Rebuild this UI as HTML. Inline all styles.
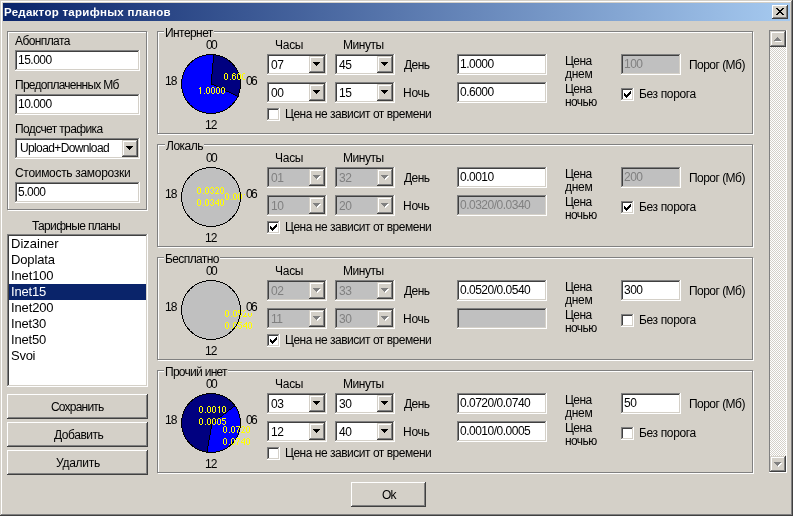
<!DOCTYPE html><html><head><meta charset="utf-8"><style>
html,body{margin:0;padding:0;background:#d4d0c8;}
#w{position:relative;width:793px;height:516px;overflow:hidden;}
#w div{position:absolute;box-sizing:border-box;}
.t,.L,.y,.T{font-family:"Liberation Sans",sans-serif;white-space:pre;color:#000;will-change:transform;}
.t{font-size:12px;line-height:13px;letter-spacing:-0.5px;}
.c{text-align:center;}
.gl{background:#d4d0c8;padding:0 1px;}
.L{font-size:13px;line-height:16px;letter-spacing:-0.1px;}
.y{font-size:10px;line-height:10px;letter-spacing:-0.5px;color:#ffff00;}
.T{font-size:11.5px;line-height:18px;font-weight:bold;letter-spacing:0.45px;color:#fff;}
</style></head><body><div id="w"><div style="left:0px;top:0px;width:793px;height:516px;background:#d4d0c8;box-shadow:inset -1px -1px #404040,inset 1px 1px #d4d0c8,inset -2px -2px #808080,inset 2px 2px #fff"></div><div style="left:3px;top:3px;width:787px;height:18px;background:linear-gradient(to right,#0a246a,#a6caf0)"></div><div class="T" style="left:4.00px;top:3px;letter-spacing:0.278px;">Редактор тарифных планов</div><div style="left:772px;top:5px;width:16px;height:14px;background:#d4d0c8;box-shadow:inset -1px -1px #404040,inset 1px 1px #fff,inset -2px -2px #808080,inset 2px 2px #d4d0c8"></div><div style="left:776px;top:8px;width:2px;height:1px;background:#000"></div><div style="left:782px;top:8px;width:2px;height:1px;background:#000"></div><div style="left:777px;top:9px;width:2px;height:1px;background:#000"></div><div style="left:781px;top:9px;width:2px;height:1px;background:#000"></div><div style="left:778px;top:10px;width:4px;height:1px;background:#000"></div><div style="left:779px;top:11px;width:2px;height:1px;background:#000"></div><div style="left:778px;top:12px;width:4px;height:1px;background:#000"></div><div style="left:777px;top:13px;width:2px;height:1px;background:#000"></div><div style="left:781px;top:13px;width:2px;height:1px;background:#000"></div><div style="left:776px;top:14px;width:2px;height:1px;background:#000"></div><div style="left:782px;top:14px;width:2px;height:1px;background:#000"></div><div style="left:8px;top:32px;width:140px;height:179px;border:1px solid #fff"></div><div style="left:7px;top:31px;width:140px;height:179px;border:1px solid #808080"></div><div class="t" style="left:15.00px;top:35px;letter-spacing:-0.600px;">Абонплата</div><div style="left:15px;top:50px;width:125px;height:21px;background:#fff;box-shadow:inset -1px -1px #fff,inset 1px 1px #808080,inset -2px -2px #d4d0c8,inset 2px 2px #404040"></div><div class="t" style="left:18px;top:54px;">15.000</div><div class="t" style="left:15.00px;top:79px;letter-spacing:-0.750px;">Предоплаченных Мб</div><div style="left:15px;top:94px;width:125px;height:21px;background:#fff;box-shadow:inset -1px -1px #fff,inset 1px 1px #808080,inset -2px -2px #d4d0c8,inset 2px 2px #404040"></div><div class="t" style="left:18px;top:98px;">10.000</div><div class="t" style="left:15.00px;top:123px;letter-spacing:-0.629px;">Подсчет трафика</div><div style="left:15px;top:138px;width:125px;height:21px;background:#fff;box-shadow:inset -1px -1px #fff,inset 1px 1px #808080,inset -2px -2px #d4d0c8,inset 2px 2px #404040"></div><div style="left:122px;top:140px;width:16px;height:17px;background:#d4d0c8;box-shadow:inset -1px -1px #404040,inset 1px 1px #d4d0c8,inset -2px -2px #808080,inset 2px 2px #fff"></div><div style="left:126px;top:146px;width:7px;height:1px;background:#000"></div><div style="left:127px;top:147px;width:5px;height:1px;background:#000"></div><div style="left:128px;top:148px;width:3px;height:1px;background:#000"></div><div style="left:129px;top:149px;width:1px;height:1px;background:#000"></div><div class="t" style="left:20.00px;top:142px;letter-spacing:-0.629px;">Upload+Download</div><div class="t" style="left:15.00px;top:167px;letter-spacing:-0.311px;">Стоимость заморозки</div><div style="left:15px;top:182px;width:125px;height:21px;background:#fff;box-shadow:inset -1px -1px #fff,inset 1px 1px #808080,inset -2px -2px #d4d0c8,inset 2px 2px #404040"></div><div class="t" style="left:18px;top:186px;">5.000</div><div class="t" style="left:32.00px;top:220px;letter-spacing:-0.677px;">Тарифные планы</div><div style="left:7px;top:234px;width:141px;height:153px;background:#fff;box-shadow:inset -1px -1px #fff,inset 1px 1px #808080,inset -2px -2px #d4d0c8,inset 2px 2px #404040"></div><div class="L" style="left:11.00px;top:236px;letter-spacing:0.000px;">Dizainer</div><div class="L" style="left:11.00px;top:252px;letter-spacing:-0.133px;">Doplata</div><div class="L" style="left:11.00px;top:268px;letter-spacing:-0.133px;">Inet100</div><div style="left:9px;top:284px;width:137px;height:16px;background:#0a246a"></div><div class="L" style="left:11.00px;top:284px;letter-spacing:-0.160px;color:#fff">Inet15</div><div class="L" style="left:11.00px;top:300px;letter-spacing:-0.133px;">Inet200</div><div class="L" style="left:11.00px;top:316px;letter-spacing:-0.160px;">Inet30</div><div class="L" style="left:11.00px;top:332px;letter-spacing:-0.160px;">Inet50</div><div class="L" style="left:11.00px;top:348px;letter-spacing:-0.267px;">Svoi</div><div style="left:7px;top:394px;width:141px;height:25px;background:#d4d0c8;box-shadow:inset -1px -1px #404040,inset 1px 1px #fff,inset -2px -2px #808080,inset 2px 2px #d4d0c8"></div><div class="t" style="left:51.00px;top:401px;letter-spacing:-0.800px;">Сохранить</div><div style="left:7px;top:422px;width:141px;height:25px;background:#d4d0c8;box-shadow:inset -1px -1px #404040,inset 1px 1px #fff,inset -2px -2px #808080,inset 2px 2px #d4d0c8"></div><div class="t" style="left:54.00px;top:429px;letter-spacing:-0.457px;">Добавить</div><div style="left:7px;top:450px;width:141px;height:25px;background:#d4d0c8;box-shadow:inset -1px -1px #404040,inset 1px 1px #fff,inset -2px -2px #808080,inset 2px 2px #d4d0c8"></div><div class="t" style="left:56.00px;top:457px;letter-spacing:-0.267px;">Удалить</div><div style="left:158px;top:32px;width:596px;height:103px;border:1px solid #fff"></div><div style="left:157px;top:31px;width:596px;height:103px;border:1px solid #808080"></div><div class="t" style="left:164.00px;top:27px;letter-spacing:-0.571px;background:#d4d0c8;padding:0 1px">Интернет</div><svg style="position:absolute;left:181px;top:54px" width="60" height="60" shape-rendering="crispEdges"><path fill="#000" d="M25 0h10v1h-10zM21 1h4v1h-4zM32 1h1v1h-1zM35 1h4v1h-4zM18 2h3v1h-3zM32 2h1v1h-1zM39 2h3v1h-3zM16 3h2v1h-2zM32 3h1v1h-1zM42 3h2v1h-2zM14 4h2v1h-2zM32 4h1v1h-1zM44 4h2v1h-2zM13 5h1v1h-1zM32 5h1v1h-1zM46 5h1v1h-1zM11 6h2v1h-2zM32 6h1v1h-1zM47 6h2v1h-2zM10 7h2v1h-2zM32 7h1v1h-1zM48 7h2v1h-2zM9 8h2v1h-2zM32 8h1v1h-1zM49 8h2v1h-2zM8 9h1v1h-1zM31 9h1v1h-1zM51 9h1v1h-1zM7 10h2v1h-2zM31 10h1v1h-1zM51 10h2v1h-2zM6 11h2v1h-2zM31 11h1v1h-1zM52 11h2v1h-2zM6 12h1v1h-1zM31 12h1v1h-1zM53 12h1v1h-1zM5 13h1v1h-1zM31 13h1v1h-1zM54 13h1v1h-1zM4 14h1v1h-1zM31 14h1v1h-1zM55 14h1v1h-1zM4 15h1v1h-1zM31 15h1v1h-1zM55 15h1v1h-1zM3 16h1v1h-1zM31 16h1v1h-1zM56 16h1v1h-1zM3 17h1v1h-1zM31 17h1v1h-1zM56 17h1v1h-1zM2 18h1v1h-1zM31 18h1v1h-1zM57 18h1v1h-1zM2 19h1v1h-1zM31 19h1v1h-1zM57 19h1v1h-1zM2 20h1v1h-1zM30 20h1v1h-1zM57 20h1v1h-1zM1 21h1v1h-1zM30 21h1v1h-1zM58 21h1v1h-1zM1 22h1v1h-1zM30 22h1v1h-1zM58 22h1v1h-1zM1 23h1v1h-1zM30 23h1v1h-1zM58 23h1v1h-1zM1 24h1v1h-1zM30 24h1v1h-1zM58 24h1v1h-1zM0 25h1v1h-1zM30 25h1v1h-1zM59 25h1v1h-1zM0 26h1v1h-1zM30 26h1v1h-1zM59 26h1v1h-1zM0 27h1v1h-1zM30 27h1v1h-1zM59 27h1v1h-1zM0 28h1v1h-1zM30 28h1v1h-1zM59 28h1v1h-1zM0 29h1v1h-1zM30 29h1v1h-1zM59 29h1v1h-1zM0 30h1v1h-1zM30 30h3v1h-3zM59 30h1v1h-1zM0 31h1v1h-1zM33 31h2v1h-2zM59 31h1v1h-1zM0 32h1v1h-1zM35 32h2v1h-2zM59 32h1v1h-1zM0 33h1v1h-1zM37 33h2v1h-2zM59 33h1v1h-1zM0 34h1v1h-1zM39 34h2v1h-2zM59 34h1v1h-1zM1 35h1v1h-1zM41 35h2v1h-2zM58 35h1v1h-1zM1 36h1v1h-1zM43 36h2v1h-2zM58 36h1v1h-1zM1 37h1v1h-1zM45 37h3v1h-3zM58 37h1v1h-1zM1 38h1v1h-1zM48 38h2v1h-2zM58 38h1v1h-1zM2 39h1v1h-1zM50 39h2v1h-2zM57 39h1v1h-1zM2 40h1v1h-1zM52 40h2v1h-2zM57 40h1v1h-1zM2 41h1v1h-1zM54 41h2v1h-2zM57 41h1v1h-1zM3 42h1v1h-1zM56 42h2v1h-2zM3 43h1v1h-1zM56 43h1v1h-1zM4 44h1v1h-1zM55 44h1v1h-1zM4 45h1v1h-1zM55 45h1v1h-1zM5 46h1v1h-1zM54 46h1v1h-1zM6 47h1v1h-1zM53 47h1v1h-1zM6 48h2v1h-2zM52 48h2v1h-2zM7 49h2v1h-2zM51 49h2v1h-2zM8 50h1v1h-1zM51 50h1v1h-1zM9 51h2v1h-2zM49 51h2v1h-2zM10 52h2v1h-2zM48 52h2v1h-2zM11 53h2v1h-2zM47 53h2v1h-2zM13 54h1v1h-1zM46 54h1v1h-1zM14 55h2v1h-2zM44 55h2v1h-2zM16 56h2v1h-2zM42 56h2v1h-2zM18 57h3v1h-3zM39 57h3v1h-3zM21 58h4v1h-4zM35 58h4v1h-4zM25 59h10v1h-10z"/><path fill="#0000ff" d="M25 1h7v1h-7zM21 2h11v1h-11zM18 3h14v1h-14zM16 4h16v1h-16zM14 5h18v1h-18zM13 6h19v1h-19zM12 7h20v1h-20zM11 8h21v1h-21zM9 9h22v1h-22zM9 10h22v1h-22zM8 11h23v1h-23zM7 12h24v1h-24zM6 13h25v1h-25zM5 14h26v1h-26zM5 15h26v1h-26zM4 16h27v1h-27zM4 17h27v1h-27zM3 18h28v1h-28zM3 19h28v1h-28zM3 20h27v1h-27zM2 21h28v1h-28zM2 22h28v1h-28zM2 23h28v1h-28zM2 24h28v1h-28zM1 25h29v1h-29zM1 26h29v1h-29zM1 27h29v1h-29zM1 28h29v1h-29zM1 29h29v1h-29zM1 30h29v1h-29zM1 31h32v1h-32zM1 32h34v1h-34zM1 33h36v1h-36zM1 34h38v1h-38zM2 35h39v1h-39zM2 36h41v1h-41zM2 37h43v1h-43zM2 38h46v1h-46zM3 39h47v1h-47zM3 40h49v1h-49zM3 41h51v1h-51zM4 42h52v1h-52zM4 43h52v1h-52zM5 44h50v1h-50zM5 45h50v1h-50zM6 46h48v1h-48zM7 47h46v1h-46zM8 48h44v1h-44zM9 49h42v1h-42zM9 50h42v1h-42zM11 51h38v1h-38zM12 52h36v1h-36zM13 53h34v1h-34zM14 54h32v1h-32zM16 55h28v1h-28zM18 56h24v1h-24zM21 57h18v1h-18zM25 58h10v1h-10z"/><path fill="#000080" d="M33 1h2v1h-2zM33 2h6v1h-6zM33 3h9v1h-9zM33 4h11v1h-11zM33 5h13v1h-13zM33 6h14v1h-14zM33 7h15v1h-15zM33 8h16v1h-16zM32 9h19v1h-19zM32 10h19v1h-19zM32 11h20v1h-20zM32 12h21v1h-21zM32 13h22v1h-22zM32 14h23v1h-23zM32 15h23v1h-23zM32 16h24v1h-24zM32 17h24v1h-24zM32 18h25v1h-25zM32 19h25v1h-25zM31 20h26v1h-26zM31 21h27v1h-27zM31 22h27v1h-27zM31 23h27v1h-27zM31 24h27v1h-27zM31 25h28v1h-28zM31 26h28v1h-28zM31 27h28v1h-28zM31 28h28v1h-28zM31 29h28v1h-28zM33 30h26v1h-26zM35 31h24v1h-24zM37 32h22v1h-22zM39 33h20v1h-20zM41 34h18v1h-18zM43 35h15v1h-15zM45 36h13v1h-13zM48 37h10v1h-10zM50 38h8v1h-8zM52 39h5v1h-5zM54 40h3v1h-3zM56 41h1v1h-1z"/></svg><svg style="position:absolute;left:0;top:0" width="793" height="516" shape-rendering="crispEdges"><path fill="#ff0" d="M225 73h2v1h-2zM224 74h1v1h-1zM227 74h1v1h-1zM224 75h1v1h-1zM227 75h1v1h-1zM224 76h1v1h-1zM227 76h1v1h-1zM224 77h1v1h-1zM227 77h1v1h-1zM224 78h1v1h-1zM227 78h1v1h-1zM225 79h2v1h-2zM230 79h1v1h-1zM233 73h2v1h-2zM232 74h1v1h-1zM235 74h1v1h-1zM232 75h3v1h-3zM232 76h1v1h-1zM235 76h1v1h-1zM232 77h1v1h-1zM235 77h1v1h-1zM232 78h1v1h-1zM235 78h1v1h-1zM233 79h2v1h-2zM238 73h2v1h-2zM237 74h1v1h-1zM240 74h1v1h-1zM237 75h1v1h-1zM240 75h1v1h-1zM237 76h1v1h-1zM240 76h1v1h-1zM237 77h1v1h-1zM240 77h1v1h-1zM237 78h1v1h-1zM240 78h1v1h-1zM238 79h2v1h-2zM243 73h2v1h-2zM242 74h1v1h-1zM245 74h1v1h-1zM242 75h1v1h-1zM245 75h1v1h-1zM242 76h1v1h-1zM245 76h1v1h-1zM242 77h1v1h-1zM245 77h1v1h-1zM242 78h1v1h-1zM245 78h1v1h-1zM243 79h2v1h-2zM248 73h2v1h-2zM247 74h1v1h-1zM250 74h1v1h-1zM247 75h1v1h-1zM250 75h1v1h-1zM247 76h1v1h-1zM250 76h1v1h-1zM247 77h1v1h-1zM250 77h1v1h-1zM247 78h1v1h-1zM250 78h1v1h-1zM248 79h2v1h-2zM200 87h1v1h-1zM199 88h2v1h-2zM200 89h1v1h-1zM200 90h1v1h-1zM200 91h1v1h-1zM200 92h1v1h-1zM200 93h1v1h-1zM204 93h1v1h-1zM207 87h2v1h-2zM206 88h1v1h-1zM209 88h1v1h-1zM206 89h1v1h-1zM209 89h1v1h-1zM206 90h1v1h-1zM209 90h1v1h-1zM206 91h1v1h-1zM209 91h1v1h-1zM206 92h1v1h-1zM209 92h1v1h-1zM207 93h2v1h-2zM212 87h2v1h-2zM211 88h1v1h-1zM214 88h1v1h-1zM211 89h1v1h-1zM214 89h1v1h-1zM211 90h1v1h-1zM214 90h1v1h-1zM211 91h1v1h-1zM214 91h1v1h-1zM211 92h1v1h-1zM214 92h1v1h-1zM212 93h2v1h-2zM217 87h2v1h-2zM216 88h1v1h-1zM219 88h1v1h-1zM216 89h1v1h-1zM219 89h1v1h-1zM216 90h1v1h-1zM219 90h1v1h-1zM216 91h1v1h-1zM219 91h1v1h-1zM216 92h1v1h-1zM219 92h1v1h-1zM217 93h2v1h-2zM222 87h2v1h-2zM221 88h1v1h-1zM224 88h1v1h-1zM221 89h1v1h-1zM224 89h1v1h-1zM221 90h1v1h-1zM224 90h1v1h-1zM221 91h1v1h-1zM224 91h1v1h-1zM221 92h1v1h-1zM224 92h1v1h-1zM222 93h2v1h-2z"/></svg><div class="t" style="left:206.00px;top:39px;letter-spacing:-1.600px;">00</div><div class="t" style="left:165.00px;top:75px;letter-spacing:-0.800px;">18</div><div class="t" style="left:245.00px;top:73px;letter-spacing:-1.600px;background:#d4d0c8;padding:2px 2px 0 1px;height:14px">06</div><div class="t" style="left:205.00px;top:119px;letter-spacing:-0.800px;">12</div><div class="t" style="left:275.00px;top:39px;letter-spacing:-0.267px;">Часы</div><div class="t" style="left:343.00px;top:39px;letter-spacing:-0.480px;">Минуты</div><div style="left:267px;top:54px;width:60px;height:21px;background:#fff;box-shadow:inset -1px -1px #fff,inset 1px 1px #808080,inset -2px -2px #d4d0c8,inset 2px 2px #404040"></div><div style="left:309px;top:56px;width:16px;height:17px;background:#d4d0c8;box-shadow:inset -1px -1px #404040,inset 1px 1px #d4d0c8,inset -2px -2px #808080,inset 2px 2px #fff"></div><div style="left:313px;top:62px;width:7px;height:1px;background:#000"></div><div style="left:314px;top:63px;width:5px;height:1px;background:#000"></div><div style="left:315px;top:64px;width:3px;height:1px;background:#000"></div><div style="left:316px;top:65px;width:1px;height:1px;background:#000"></div><div class="t" style="left:271px;top:59px;">07</div><div style="left:335px;top:54px;width:60px;height:21px;background:#fff;box-shadow:inset -1px -1px #fff,inset 1px 1px #808080,inset -2px -2px #d4d0c8,inset 2px 2px #404040"></div><div style="left:377px;top:56px;width:16px;height:17px;background:#d4d0c8;box-shadow:inset -1px -1px #404040,inset 1px 1px #d4d0c8,inset -2px -2px #808080,inset 2px 2px #fff"></div><div style="left:381px;top:62px;width:7px;height:1px;background:#000"></div><div style="left:382px;top:63px;width:5px;height:1px;background:#000"></div><div style="left:383px;top:64px;width:3px;height:1px;background:#000"></div><div style="left:384px;top:65px;width:1px;height:1px;background:#000"></div><div class="t" style="left:339px;top:59px;">45</div><div style="left:267px;top:82px;width:60px;height:21px;background:#fff;box-shadow:inset -1px -1px #fff,inset 1px 1px #808080,inset -2px -2px #d4d0c8,inset 2px 2px #404040"></div><div style="left:309px;top:84px;width:16px;height:17px;background:#d4d0c8;box-shadow:inset -1px -1px #404040,inset 1px 1px #d4d0c8,inset -2px -2px #808080,inset 2px 2px #fff"></div><div style="left:313px;top:90px;width:7px;height:1px;background:#000"></div><div style="left:314px;top:91px;width:5px;height:1px;background:#000"></div><div style="left:315px;top:92px;width:3px;height:1px;background:#000"></div><div style="left:316px;top:93px;width:1px;height:1px;background:#000"></div><div class="t" style="left:271px;top:87px;">00</div><div style="left:335px;top:82px;width:60px;height:21px;background:#fff;box-shadow:inset -1px -1px #fff,inset 1px 1px #808080,inset -2px -2px #d4d0c8,inset 2px 2px #404040"></div><div style="left:377px;top:84px;width:16px;height:17px;background:#d4d0c8;box-shadow:inset -1px -1px #404040,inset 1px 1px #d4d0c8,inset -2px -2px #808080,inset 2px 2px #fff"></div><div style="left:381px;top:90px;width:7px;height:1px;background:#000"></div><div style="left:382px;top:91px;width:5px;height:1px;background:#000"></div><div style="left:383px;top:92px;width:3px;height:1px;background:#000"></div><div style="left:384px;top:93px;width:1px;height:1px;background:#000"></div><div class="t" style="left:339px;top:87px;">15</div><div class="t" style="left:404.00px;top:59px;letter-spacing:-0.533px;">День</div><div class="t" style="left:403.00px;top:87px;letter-spacing:-0.267px;">Ночь</div><div style="left:267px;top:108px;width:13px;height:13px;background:#fff;box-shadow:inset -1px -1px #fff,inset 1px 1px #808080,inset -2px -2px #d4d0c8,inset 2px 2px #404040"></div><div class="t" style="left:285.00px;top:108px;letter-spacing:-0.480px;">Цена не зависит от времени</div><div style="left:457px;top:54px;width:90px;height:21px;background:#fff;box-shadow:inset -1px -1px #fff,inset 1px 1px #808080,inset -2px -2px #d4d0c8,inset 2px 2px #404040"></div><div class="t" style="left:460px;top:58px;">1.0000</div><div style="left:457px;top:82px;width:90px;height:21px;background:#fff;box-shadow:inset -1px -1px #fff,inset 1px 1px #808080,inset -2px -2px #d4d0c8,inset 2px 2px #404040"></div><div class="t" style="left:460px;top:86px;">0.6000</div><div class="t" style="left:565.00px;top:55px;letter-spacing:-0.533px;">Цена</div><div class="t" style="left:565.00px;top:68px;letter-spacing:-0.267px;">днем</div><div class="t" style="left:565.00px;top:83px;letter-spacing:-0.533px;">Цена</div><div class="t" style="left:565.00px;top:96px;letter-spacing:-0.600px;">ночью</div><div style="left:621px;top:54px;width:60px;height:21px;background:#c0c0c0;box-shadow:inset -1px -1px #fff,inset 1px 1px #808080,inset -2px -2px #d4d0c8,inset 2px 2px #404040"></div><div class="t" style="left:624px;top:58px;color:#808080">100</div><div class="t" style="left:689.00px;top:59px;letter-spacing:-0.533px;">Порог (Мб)</div><div style="left:621px;top:88px;width:13px;height:13px;background:#fff;box-shadow:inset -1px -1px #fff,inset 1px 1px #808080,inset -2px -2px #d4d0c8,inset 2px 2px #404040"></div><div style="left:630px;top:91px;width:1px;height:1px;background:#000"></div><div style="left:629px;top:92px;width:2px;height:1px;background:#000"></div><div style="left:624px;top:93px;width:1px;height:1px;background:#000"></div><div style="left:628px;top:93px;width:3px;height:1px;background:#000"></div><div style="left:624px;top:94px;width:2px;height:1px;background:#000"></div><div style="left:627px;top:94px;width:3px;height:1px;background:#000"></div><div style="left:624px;top:95px;width:5px;height:1px;background:#000"></div><div style="left:625px;top:96px;width:3px;height:1px;background:#000"></div><div style="left:626px;top:97px;width:1px;height:1px;background:#000"></div><div class="t" style="left:639.00px;top:88px;letter-spacing:-0.356px;">Без порога</div><div style="left:158px;top:145px;width:596px;height:103px;border:1px solid #fff"></div><div style="left:157px;top:144px;width:596px;height:103px;border:1px solid #808080"></div><div class="t" style="left:165.00px;top:140px;letter-spacing:-0.480px;background:#d4d0c8;padding:0 1px">Локаль</div><svg style="position:absolute;left:181px;top:167px" width="60" height="60" shape-rendering="crispEdges"><path fill="#c0c0c0" d="M25 1h10v1h-10zM21 2h18v1h-18zM18 3h24v1h-24zM16 4h28v1h-28zM14 5h32v1h-32zM13 6h34v1h-34zM12 7h36v1h-36zM11 8h38v1h-38zM9 9h42v1h-42zM9 10h42v1h-42zM8 11h44v1h-44zM7 12h46v1h-46zM6 13h48v1h-48zM5 14h50v1h-50zM5 15h50v1h-50zM4 16h52v1h-52zM4 17h52v1h-52zM3 18h54v1h-54zM3 19h54v1h-54zM3 20h54v1h-54zM2 21h56v1h-56zM2 22h56v1h-56zM2 23h56v1h-56zM2 24h56v1h-56zM1 25h58v1h-58zM1 26h58v1h-58zM1 27h58v1h-58zM1 28h58v1h-58zM1 29h58v1h-58zM1 30h58v1h-58zM1 31h58v1h-58zM1 32h58v1h-58zM1 33h58v1h-58zM1 34h58v1h-58zM2 35h56v1h-56zM2 36h56v1h-56zM2 37h56v1h-56zM2 38h56v1h-56zM3 39h54v1h-54zM3 40h54v1h-54zM3 41h54v1h-54zM4 42h52v1h-52zM4 43h52v1h-52zM5 44h50v1h-50zM5 45h50v1h-50zM6 46h48v1h-48zM7 47h46v1h-46zM8 48h44v1h-44zM9 49h42v1h-42zM9 50h42v1h-42zM11 51h38v1h-38zM12 52h36v1h-36zM13 53h34v1h-34zM14 54h32v1h-32zM16 55h28v1h-28zM18 56h24v1h-24zM21 57h18v1h-18zM25 58h10v1h-10z"/></svg><svg style="position:absolute;left:0;top:0" width="793" height="516" shape-rendering="crispEdges"><path fill="#ff0" d="M198 187h2v1h-2zM197 188h1v1h-1zM200 188h1v1h-1zM197 189h1v1h-1zM200 189h1v1h-1zM197 190h1v1h-1zM200 190h1v1h-1zM197 191h1v1h-1zM200 191h1v1h-1zM197 192h1v1h-1zM200 192h1v1h-1zM198 193h2v1h-2zM203 193h1v1h-1zM206 187h2v1h-2zM205 188h1v1h-1zM208 188h1v1h-1zM205 189h1v1h-1zM208 189h1v1h-1zM205 190h1v1h-1zM208 190h1v1h-1zM205 191h1v1h-1zM208 191h1v1h-1zM205 192h1v1h-1zM208 192h1v1h-1zM206 193h2v1h-2zM211 187h2v1h-2zM210 188h1v1h-1zM213 188h1v1h-1zM213 189h1v1h-1zM212 190h1v1h-1zM213 191h1v1h-1zM210 192h1v1h-1zM213 192h1v1h-1zM211 193h2v1h-2zM216 187h2v1h-2zM215 188h1v1h-1zM218 188h1v1h-1zM218 189h1v1h-1zM217 190h1v1h-1zM217 191h1v1h-1zM216 192h1v1h-1zM215 193h4v1h-4zM221 187h2v1h-2zM220 188h1v1h-1zM223 188h1v1h-1zM220 189h1v1h-1zM223 189h1v1h-1zM220 190h1v1h-1zM223 190h1v1h-1zM220 191h1v1h-1zM223 191h1v1h-1zM220 192h1v1h-1zM223 192h1v1h-1zM221 193h2v1h-2zM198 199h2v1h-2zM197 200h1v1h-1zM200 200h1v1h-1zM197 201h1v1h-1zM200 201h1v1h-1zM197 202h1v1h-1zM200 202h1v1h-1zM197 203h1v1h-1zM200 203h1v1h-1zM197 204h1v1h-1zM200 204h1v1h-1zM198 205h2v1h-2zM203 205h1v1h-1zM206 199h2v1h-2zM205 200h1v1h-1zM208 200h1v1h-1zM205 201h1v1h-1zM208 201h1v1h-1zM205 202h1v1h-1zM208 202h1v1h-1zM205 203h1v1h-1zM208 203h1v1h-1zM205 204h1v1h-1zM208 204h1v1h-1zM206 205h2v1h-2zM211 199h2v1h-2zM210 200h1v1h-1zM213 200h1v1h-1zM213 201h1v1h-1zM212 202h1v1h-1zM213 203h1v1h-1zM210 204h1v1h-1zM213 204h1v1h-1zM211 205h2v1h-2zM218 199h1v1h-1zM217 200h2v1h-2zM216 201h1v1h-1zM218 201h1v1h-1zM215 202h1v1h-1zM218 202h1v1h-1zM215 203h4v1h-4zM218 204h1v1h-1zM218 205h1v1h-1zM221 199h2v1h-2zM220 200h1v1h-1zM223 200h1v1h-1zM220 201h1v1h-1zM223 201h1v1h-1zM220 202h1v1h-1zM223 202h1v1h-1zM220 203h1v1h-1zM223 203h1v1h-1zM220 204h1v1h-1zM223 204h1v1h-1zM221 205h2v1h-2zM226 193h2v1h-2zM225 194h1v1h-1zM228 194h1v1h-1zM225 195h1v1h-1zM228 195h1v1h-1zM225 196h1v1h-1zM228 196h1v1h-1zM225 197h1v1h-1zM228 197h1v1h-1zM225 198h1v1h-1zM228 198h1v1h-1zM226 199h2v1h-2zM231 199h1v1h-1zM234 193h2v1h-2zM233 194h1v1h-1zM236 194h1v1h-1zM233 195h1v1h-1zM236 195h1v1h-1zM233 196h1v1h-1zM236 196h1v1h-1zM233 197h1v1h-1zM236 197h1v1h-1zM233 198h1v1h-1zM236 198h1v1h-1zM234 199h2v1h-2zM239 193h2v1h-2zM238 194h1v1h-1zM241 194h1v1h-1zM238 195h1v1h-1zM241 195h1v1h-1zM238 196h1v1h-1zM241 196h1v1h-1zM238 197h1v1h-1zM241 197h1v1h-1zM238 198h1v1h-1zM241 198h1v1h-1zM239 199h2v1h-2zM245 193h1v1h-1zM244 194h2v1h-2zM245 195h1v1h-1zM245 196h1v1h-1zM245 197h1v1h-1zM245 198h1v1h-1zM245 199h1v1h-1zM249 193h2v1h-2zM248 194h1v1h-1zM251 194h1v1h-1zM248 195h1v1h-1zM251 195h1v1h-1zM248 196h1v1h-1zM251 196h1v1h-1zM248 197h1v1h-1zM251 197h1v1h-1zM248 198h1v1h-1zM251 198h1v1h-1zM249 199h2v1h-2z"/></svg><svg style="position:absolute;left:181px;top:167px" width="60" height="60" shape-rendering="crispEdges"><path fill="#000" d="M25 0h10v1h-10zM21 1h4v1h-4zM35 1h4v1h-4zM18 2h3v1h-3zM39 2h3v1h-3zM16 3h2v1h-2zM42 3h2v1h-2zM14 4h2v1h-2zM44 4h2v1h-2zM13 5h1v1h-1zM46 5h1v1h-1zM11 6h2v1h-2zM47 6h2v1h-2zM10 7h2v1h-2zM48 7h2v1h-2zM9 8h2v1h-2zM49 8h2v1h-2zM8 9h1v1h-1zM51 9h1v1h-1zM7 10h2v1h-2zM51 10h2v1h-2zM6 11h2v1h-2zM52 11h2v1h-2zM6 12h1v1h-1zM53 12h1v1h-1zM5 13h1v1h-1zM54 13h1v1h-1zM4 14h1v1h-1zM55 14h1v1h-1zM4 15h1v1h-1zM55 15h1v1h-1zM3 16h1v1h-1zM56 16h1v1h-1zM3 17h1v1h-1zM56 17h1v1h-1zM2 18h1v1h-1zM57 18h1v1h-1zM2 19h1v1h-1zM57 19h1v1h-1zM2 20h1v1h-1zM57 20h1v1h-1zM1 21h1v1h-1zM58 21h1v1h-1zM1 22h1v1h-1zM58 22h1v1h-1zM1 23h1v1h-1zM58 23h1v1h-1zM1 24h1v1h-1zM58 24h1v1h-1zM0 25h1v1h-1zM59 25h1v1h-1zM0 26h1v1h-1zM59 26h1v1h-1zM0 27h1v1h-1zM59 27h1v1h-1zM0 28h1v1h-1zM59 28h1v1h-1zM0 29h1v1h-1zM59 29h1v1h-1zM0 30h1v1h-1zM59 30h1v1h-1zM0 31h1v1h-1zM59 31h1v1h-1zM0 32h1v1h-1zM59 32h1v1h-1zM0 33h1v1h-1zM59 33h1v1h-1zM0 34h1v1h-1zM59 34h1v1h-1zM1 35h1v1h-1zM58 35h1v1h-1zM1 36h1v1h-1zM58 36h1v1h-1zM1 37h1v1h-1zM58 37h1v1h-1zM1 38h1v1h-1zM58 38h1v1h-1zM2 39h1v1h-1zM57 39h1v1h-1zM2 40h1v1h-1zM57 40h1v1h-1zM2 41h1v1h-1zM57 41h1v1h-1zM3 42h1v1h-1zM56 42h1v1h-1zM3 43h1v1h-1zM56 43h1v1h-1zM4 44h1v1h-1zM55 44h1v1h-1zM4 45h1v1h-1zM55 45h1v1h-1zM5 46h1v1h-1zM54 46h1v1h-1zM6 47h1v1h-1zM53 47h1v1h-1zM6 48h2v1h-2zM52 48h2v1h-2zM7 49h2v1h-2zM51 49h2v1h-2zM8 50h1v1h-1zM51 50h1v1h-1zM9 51h2v1h-2zM49 51h2v1h-2zM10 52h2v1h-2zM48 52h2v1h-2zM11 53h2v1h-2zM47 53h2v1h-2zM13 54h1v1h-1zM46 54h1v1h-1zM14 55h2v1h-2zM44 55h2v1h-2zM16 56h2v1h-2zM42 56h2v1h-2zM18 57h3v1h-3zM39 57h3v1h-3zM21 58h4v1h-4zM35 58h4v1h-4zM25 59h10v1h-10z"/></svg><div class="t" style="left:206.00px;top:152px;letter-spacing:-1.600px;">00</div><div class="t" style="left:165.00px;top:188px;letter-spacing:-0.800px;">18</div><div class="t" style="left:245.00px;top:186px;letter-spacing:-1.600px;background:#d4d0c8;padding:2px 2px 0 1px;height:14px">06</div><div class="t" style="left:205.00px;top:232px;letter-spacing:-0.800px;">12</div><div class="t" style="left:275.00px;top:152px;letter-spacing:-0.267px;">Часы</div><div class="t" style="left:343.00px;top:152px;letter-spacing:-0.480px;">Минуты</div><div style="left:267px;top:167px;width:60px;height:21px;background:#c0c0c0;box-shadow:inset -1px -1px #fff,inset 1px 1px #808080,inset -2px -2px #d4d0c8,inset 2px 2px #404040"></div><div style="left:309px;top:169px;width:16px;height:17px;background:#d4d0c8;box-shadow:inset -1px -1px #404040,inset 1px 1px #d4d0c8,inset -2px -2px #808080,inset 2px 2px #fff"></div><div style="left:314px;top:176px;width:7px;height:1px;background:#fff"></div><div style="left:315px;top:177px;width:5px;height:1px;background:#fff"></div><div style="left:316px;top:178px;width:3px;height:1px;background:#fff"></div><div style="left:317px;top:179px;width:1px;height:1px;background:#fff"></div><div style="left:313px;top:175px;width:7px;height:1px;background:#808080"></div><div style="left:314px;top:176px;width:5px;height:1px;background:#808080"></div><div style="left:315px;top:177px;width:3px;height:1px;background:#808080"></div><div style="left:316px;top:178px;width:1px;height:1px;background:#808080"></div><div class="t" style="left:271px;top:172px;color:#808080">01</div><div style="left:335px;top:167px;width:60px;height:21px;background:#c0c0c0;box-shadow:inset -1px -1px #fff,inset 1px 1px #808080,inset -2px -2px #d4d0c8,inset 2px 2px #404040"></div><div style="left:377px;top:169px;width:16px;height:17px;background:#d4d0c8;box-shadow:inset -1px -1px #404040,inset 1px 1px #d4d0c8,inset -2px -2px #808080,inset 2px 2px #fff"></div><div style="left:382px;top:176px;width:7px;height:1px;background:#fff"></div><div style="left:383px;top:177px;width:5px;height:1px;background:#fff"></div><div style="left:384px;top:178px;width:3px;height:1px;background:#fff"></div><div style="left:385px;top:179px;width:1px;height:1px;background:#fff"></div><div style="left:381px;top:175px;width:7px;height:1px;background:#808080"></div><div style="left:382px;top:176px;width:5px;height:1px;background:#808080"></div><div style="left:383px;top:177px;width:3px;height:1px;background:#808080"></div><div style="left:384px;top:178px;width:1px;height:1px;background:#808080"></div><div class="t" style="left:339px;top:172px;color:#808080">32</div><div style="left:267px;top:195px;width:60px;height:21px;background:#c0c0c0;box-shadow:inset -1px -1px #fff,inset 1px 1px #808080,inset -2px -2px #d4d0c8,inset 2px 2px #404040"></div><div style="left:309px;top:197px;width:16px;height:17px;background:#d4d0c8;box-shadow:inset -1px -1px #404040,inset 1px 1px #d4d0c8,inset -2px -2px #808080,inset 2px 2px #fff"></div><div style="left:314px;top:204px;width:7px;height:1px;background:#fff"></div><div style="left:315px;top:205px;width:5px;height:1px;background:#fff"></div><div style="left:316px;top:206px;width:3px;height:1px;background:#fff"></div><div style="left:317px;top:207px;width:1px;height:1px;background:#fff"></div><div style="left:313px;top:203px;width:7px;height:1px;background:#808080"></div><div style="left:314px;top:204px;width:5px;height:1px;background:#808080"></div><div style="left:315px;top:205px;width:3px;height:1px;background:#808080"></div><div style="left:316px;top:206px;width:1px;height:1px;background:#808080"></div><div class="t" style="left:271px;top:200px;color:#808080">10</div><div style="left:335px;top:195px;width:60px;height:21px;background:#c0c0c0;box-shadow:inset -1px -1px #fff,inset 1px 1px #808080,inset -2px -2px #d4d0c8,inset 2px 2px #404040"></div><div style="left:377px;top:197px;width:16px;height:17px;background:#d4d0c8;box-shadow:inset -1px -1px #404040,inset 1px 1px #d4d0c8,inset -2px -2px #808080,inset 2px 2px #fff"></div><div style="left:382px;top:204px;width:7px;height:1px;background:#fff"></div><div style="left:383px;top:205px;width:5px;height:1px;background:#fff"></div><div style="left:384px;top:206px;width:3px;height:1px;background:#fff"></div><div style="left:385px;top:207px;width:1px;height:1px;background:#fff"></div><div style="left:381px;top:203px;width:7px;height:1px;background:#808080"></div><div style="left:382px;top:204px;width:5px;height:1px;background:#808080"></div><div style="left:383px;top:205px;width:3px;height:1px;background:#808080"></div><div style="left:384px;top:206px;width:1px;height:1px;background:#808080"></div><div class="t" style="left:339px;top:200px;color:#808080">20</div><div class="t" style="left:404.00px;top:172px;letter-spacing:-0.533px;">День</div><div class="t" style="left:403.00px;top:200px;letter-spacing:-0.267px;">Ночь</div><div style="left:267px;top:221px;width:13px;height:13px;background:#fff;box-shadow:inset -1px -1px #fff,inset 1px 1px #808080,inset -2px -2px #d4d0c8,inset 2px 2px #404040"></div><div style="left:276px;top:224px;width:1px;height:1px;background:#000"></div><div style="left:275px;top:225px;width:2px;height:1px;background:#000"></div><div style="left:270px;top:226px;width:1px;height:1px;background:#000"></div><div style="left:274px;top:226px;width:3px;height:1px;background:#000"></div><div style="left:270px;top:227px;width:2px;height:1px;background:#000"></div><div style="left:273px;top:227px;width:3px;height:1px;background:#000"></div><div style="left:270px;top:228px;width:5px;height:1px;background:#000"></div><div style="left:271px;top:229px;width:3px;height:1px;background:#000"></div><div style="left:272px;top:230px;width:1px;height:1px;background:#000"></div><div class="t" style="left:285.00px;top:221px;letter-spacing:-0.480px;">Цена не зависит от времени</div><div style="left:457px;top:167px;width:90px;height:21px;background:#fff;box-shadow:inset -1px -1px #fff,inset 1px 1px #808080,inset -2px -2px #d4d0c8,inset 2px 2px #404040"></div><div class="t" style="left:460px;top:171px;">0.0010</div><div style="left:457px;top:195px;width:90px;height:21px;background:#c0c0c0;box-shadow:inset -1px -1px #fff,inset 1px 1px #808080,inset -2px -2px #d4d0c8,inset 2px 2px #404040"></div><div class="t" style="left:460px;top:199px;color:#808080">0.0320/0.0340</div><div class="t" style="left:565.00px;top:168px;letter-spacing:-0.533px;">Цена</div><div class="t" style="left:565.00px;top:181px;letter-spacing:-0.267px;">днем</div><div class="t" style="left:565.00px;top:196px;letter-spacing:-0.533px;">Цена</div><div class="t" style="left:565.00px;top:209px;letter-spacing:-0.600px;">ночью</div><div style="left:621px;top:167px;width:60px;height:21px;background:#c0c0c0;box-shadow:inset -1px -1px #fff,inset 1px 1px #808080,inset -2px -2px #d4d0c8,inset 2px 2px #404040"></div><div class="t" style="left:624px;top:171px;color:#808080">200</div><div class="t" style="left:689.00px;top:172px;letter-spacing:-0.533px;">Порог (Мб)</div><div style="left:621px;top:201px;width:13px;height:13px;background:#fff;box-shadow:inset -1px -1px #fff,inset 1px 1px #808080,inset -2px -2px #d4d0c8,inset 2px 2px #404040"></div><div style="left:630px;top:204px;width:1px;height:1px;background:#000"></div><div style="left:629px;top:205px;width:2px;height:1px;background:#000"></div><div style="left:624px;top:206px;width:1px;height:1px;background:#000"></div><div style="left:628px;top:206px;width:3px;height:1px;background:#000"></div><div style="left:624px;top:207px;width:2px;height:1px;background:#000"></div><div style="left:627px;top:207px;width:3px;height:1px;background:#000"></div><div style="left:624px;top:208px;width:5px;height:1px;background:#000"></div><div style="left:625px;top:209px;width:3px;height:1px;background:#000"></div><div style="left:626px;top:210px;width:1px;height:1px;background:#000"></div><div class="t" style="left:639.00px;top:201px;letter-spacing:-0.356px;">Без порога</div><div style="left:158px;top:258px;width:596px;height:103px;border:1px solid #fff"></div><div style="left:157px;top:257px;width:596px;height:103px;border:1px solid #808080"></div><div class="t" style="left:164.00px;top:253px;letter-spacing:-0.600px;background:#d4d0c8;padding:0 1px">Бесплатно</div><svg style="position:absolute;left:181px;top:280px" width="60" height="60" shape-rendering="crispEdges"><path fill="#c0c0c0" d="M25 1h10v1h-10zM21 2h18v1h-18zM18 3h24v1h-24zM16 4h28v1h-28zM14 5h32v1h-32zM13 6h34v1h-34zM12 7h36v1h-36zM11 8h38v1h-38zM9 9h42v1h-42zM9 10h42v1h-42zM8 11h44v1h-44zM7 12h46v1h-46zM6 13h48v1h-48zM5 14h50v1h-50zM5 15h50v1h-50zM4 16h52v1h-52zM4 17h52v1h-52zM3 18h54v1h-54zM3 19h54v1h-54zM3 20h54v1h-54zM2 21h56v1h-56zM2 22h56v1h-56zM2 23h56v1h-56zM2 24h56v1h-56zM1 25h58v1h-58zM1 26h58v1h-58zM1 27h58v1h-58zM1 28h58v1h-58zM1 29h58v1h-58zM1 30h58v1h-58zM1 31h58v1h-58zM1 32h58v1h-58zM1 33h58v1h-58zM1 34h58v1h-58zM2 35h56v1h-56zM2 36h56v1h-56zM2 37h56v1h-56zM2 38h56v1h-56zM3 39h54v1h-54zM3 40h54v1h-54zM3 41h54v1h-54zM4 42h52v1h-52zM4 43h52v1h-52zM5 44h50v1h-50zM5 45h50v1h-50zM6 46h48v1h-48zM7 47h46v1h-46zM8 48h44v1h-44zM9 49h42v1h-42zM9 50h42v1h-42zM11 51h38v1h-38zM12 52h36v1h-36zM13 53h34v1h-34zM14 54h32v1h-32zM16 55h28v1h-28zM18 56h24v1h-24zM21 57h18v1h-18zM25 58h10v1h-10z"/></svg><svg style="position:absolute;left:0;top:0" width="793" height="516" shape-rendering="crispEdges"><path fill="#ff0" d="M226 310h2v1h-2zM225 311h1v1h-1zM228 311h1v1h-1zM225 312h1v1h-1zM228 312h1v1h-1zM225 313h1v1h-1zM228 313h1v1h-1zM225 314h1v1h-1zM228 314h1v1h-1zM225 315h1v1h-1zM228 315h1v1h-1zM226 316h2v1h-2zM231 316h1v1h-1zM234 310h2v1h-2zM233 311h1v1h-1zM236 311h1v1h-1zM233 312h1v1h-1zM236 312h1v1h-1zM233 313h1v1h-1zM236 313h1v1h-1zM233 314h1v1h-1zM236 314h1v1h-1zM233 315h1v1h-1zM236 315h1v1h-1zM234 316h2v1h-2zM238 310h4v1h-4zM238 311h1v1h-1zM238 312h3v1h-3zM241 313h1v1h-1zM241 314h1v1h-1zM238 315h1v1h-1zM241 315h1v1h-1zM239 316h2v1h-2zM244 310h2v1h-2zM243 311h1v1h-1zM246 311h1v1h-1zM246 312h1v1h-1zM245 313h1v1h-1zM245 314h1v1h-1zM244 315h1v1h-1zM243 316h4v1h-4zM249 310h2v1h-2zM248 311h1v1h-1zM251 311h1v1h-1zM248 312h1v1h-1zM251 312h1v1h-1zM248 313h1v1h-1zM251 313h1v1h-1zM248 314h1v1h-1zM251 314h1v1h-1zM248 315h1v1h-1zM251 315h1v1h-1zM249 316h2v1h-2zM226 322h2v1h-2zM225 323h1v1h-1zM228 323h1v1h-1zM225 324h1v1h-1zM228 324h1v1h-1zM225 325h1v1h-1zM228 325h1v1h-1zM225 326h1v1h-1zM228 326h1v1h-1zM225 327h1v1h-1zM228 327h1v1h-1zM226 328h2v1h-2zM231 328h1v1h-1zM234 322h2v1h-2zM233 323h1v1h-1zM236 323h1v1h-1zM233 324h1v1h-1zM236 324h1v1h-1zM233 325h1v1h-1zM236 325h1v1h-1zM233 326h1v1h-1zM236 326h1v1h-1zM233 327h1v1h-1zM236 327h1v1h-1zM234 328h2v1h-2zM238 322h4v1h-4zM238 323h1v1h-1zM238 324h3v1h-3zM241 325h1v1h-1zM241 326h1v1h-1zM238 327h1v1h-1zM241 327h1v1h-1zM239 328h2v1h-2zM246 322h1v1h-1zM245 323h2v1h-2zM244 324h1v1h-1zM246 324h1v1h-1zM243 325h1v1h-1zM246 325h1v1h-1zM243 326h4v1h-4zM246 327h1v1h-1zM246 328h1v1h-1zM249 322h2v1h-2zM248 323h1v1h-1zM251 323h1v1h-1zM248 324h1v1h-1zM251 324h1v1h-1zM248 325h1v1h-1zM251 325h1v1h-1zM248 326h1v1h-1zM251 326h1v1h-1zM248 327h1v1h-1zM251 327h1v1h-1zM249 328h2v1h-2z"/></svg><svg style="position:absolute;left:181px;top:280px" width="60" height="60" shape-rendering="crispEdges"><path fill="#000" d="M25 0h10v1h-10zM21 1h4v1h-4zM35 1h4v1h-4zM18 2h3v1h-3zM39 2h3v1h-3zM16 3h2v1h-2zM42 3h2v1h-2zM14 4h2v1h-2zM44 4h2v1h-2zM13 5h1v1h-1zM46 5h1v1h-1zM11 6h2v1h-2zM47 6h2v1h-2zM10 7h2v1h-2zM48 7h2v1h-2zM9 8h2v1h-2zM49 8h2v1h-2zM8 9h1v1h-1zM51 9h1v1h-1zM7 10h2v1h-2zM51 10h2v1h-2zM6 11h2v1h-2zM52 11h2v1h-2zM6 12h1v1h-1zM53 12h1v1h-1zM5 13h1v1h-1zM54 13h1v1h-1zM4 14h1v1h-1zM55 14h1v1h-1zM4 15h1v1h-1zM55 15h1v1h-1zM3 16h1v1h-1zM56 16h1v1h-1zM3 17h1v1h-1zM56 17h1v1h-1zM2 18h1v1h-1zM57 18h1v1h-1zM2 19h1v1h-1zM57 19h1v1h-1zM2 20h1v1h-1zM57 20h1v1h-1zM1 21h1v1h-1zM58 21h1v1h-1zM1 22h1v1h-1zM58 22h1v1h-1zM1 23h1v1h-1zM58 23h1v1h-1zM1 24h1v1h-1zM58 24h1v1h-1zM0 25h1v1h-1zM59 25h1v1h-1zM0 26h1v1h-1zM59 26h1v1h-1zM0 27h1v1h-1zM59 27h1v1h-1zM0 28h1v1h-1zM59 28h1v1h-1zM0 29h1v1h-1zM59 29h1v1h-1zM0 30h1v1h-1zM59 30h1v1h-1zM0 31h1v1h-1zM59 31h1v1h-1zM0 32h1v1h-1zM59 32h1v1h-1zM0 33h1v1h-1zM59 33h1v1h-1zM0 34h1v1h-1zM59 34h1v1h-1zM1 35h1v1h-1zM58 35h1v1h-1zM1 36h1v1h-1zM58 36h1v1h-1zM1 37h1v1h-1zM58 37h1v1h-1zM1 38h1v1h-1zM58 38h1v1h-1zM2 39h1v1h-1zM57 39h1v1h-1zM2 40h1v1h-1zM57 40h1v1h-1zM2 41h1v1h-1zM57 41h1v1h-1zM3 42h1v1h-1zM56 42h1v1h-1zM3 43h1v1h-1zM56 43h1v1h-1zM4 44h1v1h-1zM55 44h1v1h-1zM4 45h1v1h-1zM55 45h1v1h-1zM5 46h1v1h-1zM54 46h1v1h-1zM6 47h1v1h-1zM53 47h1v1h-1zM6 48h2v1h-2zM52 48h2v1h-2zM7 49h2v1h-2zM51 49h2v1h-2zM8 50h1v1h-1zM51 50h1v1h-1zM9 51h2v1h-2zM49 51h2v1h-2zM10 52h2v1h-2zM48 52h2v1h-2zM11 53h2v1h-2zM47 53h2v1h-2zM13 54h1v1h-1zM46 54h1v1h-1zM14 55h2v1h-2zM44 55h2v1h-2zM16 56h2v1h-2zM42 56h2v1h-2zM18 57h3v1h-3zM39 57h3v1h-3zM21 58h4v1h-4zM35 58h4v1h-4zM25 59h10v1h-10z"/></svg><div class="t" style="left:206.00px;top:265px;letter-spacing:-1.600px;">00</div><div class="t" style="left:165.00px;top:301px;letter-spacing:-0.800px;">18</div><div class="t" style="left:245.00px;top:299px;letter-spacing:-1.600px;background:#d4d0c8;padding:2px 2px 0 1px;height:14px">06</div><div class="t" style="left:205.00px;top:345px;letter-spacing:-0.800px;">12</div><div class="t" style="left:275.00px;top:265px;letter-spacing:-0.267px;">Часы</div><div class="t" style="left:343.00px;top:265px;letter-spacing:-0.480px;">Минуты</div><div style="left:267px;top:280px;width:60px;height:21px;background:#c0c0c0;box-shadow:inset -1px -1px #fff,inset 1px 1px #808080,inset -2px -2px #d4d0c8,inset 2px 2px #404040"></div><div style="left:309px;top:282px;width:16px;height:17px;background:#d4d0c8;box-shadow:inset -1px -1px #404040,inset 1px 1px #d4d0c8,inset -2px -2px #808080,inset 2px 2px #fff"></div><div style="left:314px;top:289px;width:7px;height:1px;background:#fff"></div><div style="left:315px;top:290px;width:5px;height:1px;background:#fff"></div><div style="left:316px;top:291px;width:3px;height:1px;background:#fff"></div><div style="left:317px;top:292px;width:1px;height:1px;background:#fff"></div><div style="left:313px;top:288px;width:7px;height:1px;background:#808080"></div><div style="left:314px;top:289px;width:5px;height:1px;background:#808080"></div><div style="left:315px;top:290px;width:3px;height:1px;background:#808080"></div><div style="left:316px;top:291px;width:1px;height:1px;background:#808080"></div><div class="t" style="left:271px;top:285px;color:#808080">02</div><div style="left:335px;top:280px;width:60px;height:21px;background:#c0c0c0;box-shadow:inset -1px -1px #fff,inset 1px 1px #808080,inset -2px -2px #d4d0c8,inset 2px 2px #404040"></div><div style="left:377px;top:282px;width:16px;height:17px;background:#d4d0c8;box-shadow:inset -1px -1px #404040,inset 1px 1px #d4d0c8,inset -2px -2px #808080,inset 2px 2px #fff"></div><div style="left:382px;top:289px;width:7px;height:1px;background:#fff"></div><div style="left:383px;top:290px;width:5px;height:1px;background:#fff"></div><div style="left:384px;top:291px;width:3px;height:1px;background:#fff"></div><div style="left:385px;top:292px;width:1px;height:1px;background:#fff"></div><div style="left:381px;top:288px;width:7px;height:1px;background:#808080"></div><div style="left:382px;top:289px;width:5px;height:1px;background:#808080"></div><div style="left:383px;top:290px;width:3px;height:1px;background:#808080"></div><div style="left:384px;top:291px;width:1px;height:1px;background:#808080"></div><div class="t" style="left:339px;top:285px;color:#808080">33</div><div style="left:267px;top:308px;width:60px;height:21px;background:#c0c0c0;box-shadow:inset -1px -1px #fff,inset 1px 1px #808080,inset -2px -2px #d4d0c8,inset 2px 2px #404040"></div><div style="left:309px;top:310px;width:16px;height:17px;background:#d4d0c8;box-shadow:inset -1px -1px #404040,inset 1px 1px #d4d0c8,inset -2px -2px #808080,inset 2px 2px #fff"></div><div style="left:314px;top:317px;width:7px;height:1px;background:#fff"></div><div style="left:315px;top:318px;width:5px;height:1px;background:#fff"></div><div style="left:316px;top:319px;width:3px;height:1px;background:#fff"></div><div style="left:317px;top:320px;width:1px;height:1px;background:#fff"></div><div style="left:313px;top:316px;width:7px;height:1px;background:#808080"></div><div style="left:314px;top:317px;width:5px;height:1px;background:#808080"></div><div style="left:315px;top:318px;width:3px;height:1px;background:#808080"></div><div style="left:316px;top:319px;width:1px;height:1px;background:#808080"></div><div class="t" style="left:271px;top:313px;color:#808080">11</div><div style="left:335px;top:308px;width:60px;height:21px;background:#c0c0c0;box-shadow:inset -1px -1px #fff,inset 1px 1px #808080,inset -2px -2px #d4d0c8,inset 2px 2px #404040"></div><div style="left:377px;top:310px;width:16px;height:17px;background:#d4d0c8;box-shadow:inset -1px -1px #404040,inset 1px 1px #d4d0c8,inset -2px -2px #808080,inset 2px 2px #fff"></div><div style="left:382px;top:317px;width:7px;height:1px;background:#fff"></div><div style="left:383px;top:318px;width:5px;height:1px;background:#fff"></div><div style="left:384px;top:319px;width:3px;height:1px;background:#fff"></div><div style="left:385px;top:320px;width:1px;height:1px;background:#fff"></div><div style="left:381px;top:316px;width:7px;height:1px;background:#808080"></div><div style="left:382px;top:317px;width:5px;height:1px;background:#808080"></div><div style="left:383px;top:318px;width:3px;height:1px;background:#808080"></div><div style="left:384px;top:319px;width:1px;height:1px;background:#808080"></div><div class="t" style="left:339px;top:313px;color:#808080">30</div><div class="t" style="left:404.00px;top:285px;letter-spacing:-0.533px;">День</div><div class="t" style="left:403.00px;top:313px;letter-spacing:-0.267px;">Ночь</div><div style="left:267px;top:334px;width:13px;height:13px;background:#fff;box-shadow:inset -1px -1px #fff,inset 1px 1px #808080,inset -2px -2px #d4d0c8,inset 2px 2px #404040"></div><div style="left:276px;top:337px;width:1px;height:1px;background:#000"></div><div style="left:275px;top:338px;width:2px;height:1px;background:#000"></div><div style="left:270px;top:339px;width:1px;height:1px;background:#000"></div><div style="left:274px;top:339px;width:3px;height:1px;background:#000"></div><div style="left:270px;top:340px;width:2px;height:1px;background:#000"></div><div style="left:273px;top:340px;width:3px;height:1px;background:#000"></div><div style="left:270px;top:341px;width:5px;height:1px;background:#000"></div><div style="left:271px;top:342px;width:3px;height:1px;background:#000"></div><div style="left:272px;top:343px;width:1px;height:1px;background:#000"></div><div class="t" style="left:285.00px;top:334px;letter-spacing:-0.480px;">Цена не зависит от времени</div><div style="left:457px;top:280px;width:90px;height:21px;background:#fff;box-shadow:inset -1px -1px #fff,inset 1px 1px #808080,inset -2px -2px #d4d0c8,inset 2px 2px #404040"></div><div class="t" style="left:460px;top:284px;">0.0520/0.0540</div><div style="left:457px;top:308px;width:90px;height:21px;background:#c0c0c0;box-shadow:inset -1px -1px #fff,inset 1px 1px #808080,inset -2px -2px #d4d0c8,inset 2px 2px #404040"></div><div class="t" style="left:565.00px;top:281px;letter-spacing:-0.533px;">Цена</div><div class="t" style="left:565.00px;top:294px;letter-spacing:-0.267px;">днем</div><div class="t" style="left:565.00px;top:309px;letter-spacing:-0.533px;">Цена</div><div class="t" style="left:565.00px;top:322px;letter-spacing:-0.600px;">ночью</div><div style="left:621px;top:280px;width:60px;height:21px;background:#fff;box-shadow:inset -1px -1px #fff,inset 1px 1px #808080,inset -2px -2px #d4d0c8,inset 2px 2px #404040"></div><div class="t" style="left:624px;top:284px;">300</div><div class="t" style="left:689.00px;top:285px;letter-spacing:-0.533px;">Порог (Мб)</div><div style="left:621px;top:314px;width:13px;height:13px;background:#fff;box-shadow:inset -1px -1px #fff,inset 1px 1px #808080,inset -2px -2px #d4d0c8,inset 2px 2px #404040"></div><div class="t" style="left:639.00px;top:314px;letter-spacing:-0.356px;">Без порога</div><div style="left:158px;top:371px;width:596px;height:103px;border:1px solid #fff"></div><div style="left:157px;top:370px;width:596px;height:103px;border:1px solid #808080"></div><div class="t" style="left:164.00px;top:366px;letter-spacing:-0.720px;background:#d4d0c8;padding:0 1px">Прочий инет</div><svg style="position:absolute;left:181px;top:393px" width="60" height="60" shape-rendering="crispEdges"><path fill="#000" d="M25 0h10v1h-10zM21 1h4v1h-4zM35 1h4v1h-4zM18 2h3v1h-3zM39 2h3v1h-3zM16 3h2v1h-2zM42 3h2v1h-2zM14 4h2v1h-2zM44 4h2v1h-2zM13 5h1v1h-1zM46 5h1v1h-1zM11 6h2v1h-2zM47 6h2v1h-2zM10 7h2v1h-2zM48 7h2v1h-2zM9 8h2v1h-2zM49 8h2v1h-2zM8 9h1v1h-1zM51 9h1v1h-1zM7 10h2v1h-2zM51 10h2v1h-2zM6 11h2v1h-2zM52 11h2v1h-2zM6 12h1v1h-1zM53 12h1v1h-1zM5 13h1v1h-1zM52 13h3v1h-3zM4 14h1v1h-1zM51 14h1v1h-1zM55 14h1v1h-1zM4 15h1v1h-1zM50 15h1v1h-1zM55 15h1v1h-1zM3 16h1v1h-1zM48 16h2v1h-2zM56 16h1v1h-1zM3 17h1v1h-1zM47 17h1v1h-1zM56 17h1v1h-1zM2 18h1v1h-1zM46 18h1v1h-1zM57 18h1v1h-1zM2 19h1v1h-1zM45 19h1v1h-1zM57 19h1v1h-1zM2 20h1v1h-1zM43 20h2v1h-2zM57 20h1v1h-1zM1 21h1v1h-1zM42 21h1v1h-1zM58 21h1v1h-1zM1 22h1v1h-1zM41 22h1v1h-1zM58 22h1v1h-1zM1 23h1v1h-1zM39 23h2v1h-2zM58 23h1v1h-1zM1 24h1v1h-1zM38 24h1v1h-1zM58 24h1v1h-1zM0 25h1v1h-1zM37 25h1v1h-1zM59 25h1v1h-1zM0 26h1v1h-1zM36 26h1v1h-1zM59 26h1v1h-1zM0 27h1v1h-1zM34 27h2v1h-2zM59 27h1v1h-1zM0 28h1v1h-1zM33 28h1v1h-1zM59 28h1v1h-1zM0 29h1v1h-1zM32 29h1v1h-1zM59 29h1v1h-1zM0 30h1v1h-1zM30 30h2v1h-2zM59 30h1v1h-1zM0 31h1v1h-1zM30 31h1v1h-1zM59 31h1v1h-1zM0 32h1v1h-1zM30 32h1v1h-1zM59 32h1v1h-1zM0 33h1v1h-1zM30 33h1v1h-1zM59 33h1v1h-1zM0 34h1v1h-1zM30 34h1v1h-1zM59 34h1v1h-1zM1 35h1v1h-1zM30 35h1v1h-1zM58 35h1v1h-1zM1 36h1v1h-1zM29 36h1v1h-1zM58 36h1v1h-1zM1 37h1v1h-1zM29 37h1v1h-1zM58 37h1v1h-1zM1 38h1v1h-1zM29 38h1v1h-1zM58 38h1v1h-1zM2 39h1v1h-1zM29 39h1v1h-1zM57 39h1v1h-1zM2 40h1v1h-1zM29 40h1v1h-1zM57 40h1v1h-1zM2 41h1v1h-1zM29 41h1v1h-1zM57 41h1v1h-1zM3 42h1v1h-1zM28 42h1v1h-1zM56 42h1v1h-1zM3 43h1v1h-1zM28 43h1v1h-1zM56 43h1v1h-1zM4 44h1v1h-1zM28 44h1v1h-1zM55 44h1v1h-1zM4 45h1v1h-1zM28 45h1v1h-1zM55 45h1v1h-1zM5 46h1v1h-1zM28 46h1v1h-1zM54 46h1v1h-1zM6 47h1v1h-1zM27 47h1v1h-1zM53 47h1v1h-1zM6 48h2v1h-2zM27 48h1v1h-1zM52 48h2v1h-2zM7 49h2v1h-2zM27 49h1v1h-1zM51 49h2v1h-2zM8 50h1v1h-1zM27 50h1v1h-1zM51 50h1v1h-1zM9 51h2v1h-2zM27 51h1v1h-1zM49 51h2v1h-2zM10 52h2v1h-2zM27 52h1v1h-1zM48 52h2v1h-2zM11 53h2v1h-2zM26 53h1v1h-1zM47 53h2v1h-2zM13 54h1v1h-1zM26 54h1v1h-1zM46 54h1v1h-1zM14 55h2v1h-2zM26 55h1v1h-1zM44 55h2v1h-2zM16 56h2v1h-2zM26 56h1v1h-1zM42 56h2v1h-2zM18 57h3v1h-3zM26 57h1v1h-1zM39 57h3v1h-3zM21 58h4v1h-4zM26 58h1v1h-1zM35 58h4v1h-4zM25 59h10v1h-10z"/><path fill="#000080" d="M25 1h10v1h-10zM21 2h18v1h-18zM18 3h24v1h-24zM16 4h28v1h-28zM14 5h32v1h-32zM13 6h34v1h-34zM12 7h36v1h-36zM11 8h38v1h-38zM9 9h42v1h-42zM9 10h42v1h-42zM8 11h44v1h-44zM7 12h46v1h-46zM6 13h46v1h-46zM5 14h46v1h-46zM5 15h45v1h-45zM4 16h44v1h-44zM4 17h43v1h-43zM3 18h43v1h-43zM3 19h42v1h-42zM3 20h40v1h-40zM2 21h40v1h-40zM2 22h39v1h-39zM2 23h37v1h-37zM2 24h36v1h-36zM1 25h36v1h-36zM1 26h35v1h-35zM1 27h33v1h-33zM1 28h32v1h-32zM1 29h31v1h-31zM1 30h29v1h-29zM1 31h29v1h-29zM1 32h29v1h-29zM1 33h29v1h-29zM1 34h29v1h-29zM2 35h28v1h-28zM2 36h27v1h-27zM2 37h27v1h-27zM2 38h27v1h-27zM3 39h26v1h-26zM3 40h26v1h-26zM3 41h26v1h-26zM4 42h24v1h-24zM4 43h24v1h-24zM5 44h23v1h-23zM5 45h23v1h-23zM6 46h22v1h-22zM7 47h20v1h-20zM8 48h19v1h-19zM9 49h18v1h-18zM9 50h18v1h-18zM11 51h16v1h-16zM12 52h15v1h-15zM13 53h13v1h-13zM14 54h12v1h-12zM16 55h10v1h-10zM18 56h8v1h-8zM21 57h5v1h-5zM25 58h1v1h-1z"/><path fill="#0000ff" d="M52 14h3v1h-3zM51 15h4v1h-4zM50 16h6v1h-6zM48 17h8v1h-8zM47 18h10v1h-10zM46 19h11v1h-11zM45 20h12v1h-12zM43 21h15v1h-15zM42 22h16v1h-16zM41 23h17v1h-17zM39 24h19v1h-19zM38 25h21v1h-21zM37 26h22v1h-22zM36 27h23v1h-23zM34 28h25v1h-25zM33 29h26v1h-26zM32 30h27v1h-27zM31 31h28v1h-28zM31 32h28v1h-28zM31 33h28v1h-28zM31 34h28v1h-28zM31 35h27v1h-27zM30 36h28v1h-28zM30 37h28v1h-28zM30 38h28v1h-28zM30 39h27v1h-27zM30 40h27v1h-27zM30 41h27v1h-27zM29 42h27v1h-27zM29 43h27v1h-27zM29 44h26v1h-26zM29 45h26v1h-26zM29 46h25v1h-25zM28 47h25v1h-25zM28 48h24v1h-24zM28 49h23v1h-23zM28 50h23v1h-23zM28 51h21v1h-21zM28 52h20v1h-20zM27 53h20v1h-20zM27 54h19v1h-19zM27 55h17v1h-17zM27 56h15v1h-15zM27 57h12v1h-12zM27 58h8v1h-8z"/></svg><svg style="position:absolute;left:0;top:0" width="793" height="516" shape-rendering="crispEdges"><path fill="#ff0" d="M200 406h2v1h-2zM199 407h1v1h-1zM202 407h1v1h-1zM199 408h1v1h-1zM202 408h1v1h-1zM199 409h1v1h-1zM202 409h1v1h-1zM199 410h1v1h-1zM202 410h1v1h-1zM199 411h1v1h-1zM202 411h1v1h-1zM200 412h2v1h-2zM205 412h1v1h-1zM208 406h2v1h-2zM207 407h1v1h-1zM210 407h1v1h-1zM207 408h1v1h-1zM210 408h1v1h-1zM207 409h1v1h-1zM210 409h1v1h-1zM207 410h1v1h-1zM210 410h1v1h-1zM207 411h1v1h-1zM210 411h1v1h-1zM208 412h2v1h-2zM213 406h2v1h-2zM212 407h1v1h-1zM215 407h1v1h-1zM212 408h1v1h-1zM215 408h1v1h-1zM212 409h1v1h-1zM215 409h1v1h-1zM212 410h1v1h-1zM215 410h1v1h-1zM212 411h1v1h-1zM215 411h1v1h-1zM213 412h2v1h-2zM219 406h1v1h-1zM218 407h2v1h-2zM219 408h1v1h-1zM219 409h1v1h-1zM219 410h1v1h-1zM219 411h1v1h-1zM219 412h1v1h-1zM223 406h2v1h-2zM222 407h1v1h-1zM225 407h1v1h-1zM222 408h1v1h-1zM225 408h1v1h-1zM222 409h1v1h-1zM225 409h1v1h-1zM222 410h1v1h-1zM225 410h1v1h-1zM222 411h1v1h-1zM225 411h1v1h-1zM223 412h2v1h-2zM200 418h2v1h-2zM199 419h1v1h-1zM202 419h1v1h-1zM199 420h1v1h-1zM202 420h1v1h-1zM199 421h1v1h-1zM202 421h1v1h-1zM199 422h1v1h-1zM202 422h1v1h-1zM199 423h1v1h-1zM202 423h1v1h-1zM200 424h2v1h-2zM205 424h1v1h-1zM208 418h2v1h-2zM207 419h1v1h-1zM210 419h1v1h-1zM207 420h1v1h-1zM210 420h1v1h-1zM207 421h1v1h-1zM210 421h1v1h-1zM207 422h1v1h-1zM210 422h1v1h-1zM207 423h1v1h-1zM210 423h1v1h-1zM208 424h2v1h-2zM213 418h2v1h-2zM212 419h1v1h-1zM215 419h1v1h-1zM212 420h1v1h-1zM215 420h1v1h-1zM212 421h1v1h-1zM215 421h1v1h-1zM212 422h1v1h-1zM215 422h1v1h-1zM212 423h1v1h-1zM215 423h1v1h-1zM213 424h2v1h-2zM218 418h2v1h-2zM217 419h1v1h-1zM220 419h1v1h-1zM217 420h1v1h-1zM220 420h1v1h-1zM217 421h1v1h-1zM220 421h1v1h-1zM217 422h1v1h-1zM220 422h1v1h-1zM217 423h1v1h-1zM220 423h1v1h-1zM218 424h2v1h-2zM222 418h4v1h-4zM222 419h1v1h-1zM222 420h3v1h-3zM225 421h1v1h-1zM225 422h1v1h-1zM222 423h1v1h-1zM225 423h1v1h-1zM223 424h2v1h-2zM224 426h2v1h-2zM223 427h1v1h-1zM226 427h1v1h-1zM223 428h1v1h-1zM226 428h1v1h-1zM223 429h1v1h-1zM226 429h1v1h-1zM223 430h1v1h-1zM226 430h1v1h-1zM223 431h1v1h-1zM226 431h1v1h-1zM224 432h2v1h-2zM229 432h1v1h-1zM232 426h2v1h-2zM231 427h1v1h-1zM234 427h1v1h-1zM231 428h1v1h-1zM234 428h1v1h-1zM231 429h1v1h-1zM234 429h1v1h-1zM231 430h1v1h-1zM234 430h1v1h-1zM231 431h1v1h-1zM234 431h1v1h-1zM232 432h2v1h-2zM236 426h4v1h-4zM239 427h1v1h-1zM238 428h1v1h-1zM238 429h1v1h-1zM237 430h1v1h-1zM237 431h1v1h-1zM237 432h1v1h-1zM242 426h2v1h-2zM241 427h1v1h-1zM244 427h1v1h-1zM244 428h1v1h-1zM243 429h1v1h-1zM243 430h1v1h-1zM242 431h1v1h-1zM241 432h4v1h-4zM247 426h2v1h-2zM246 427h1v1h-1zM249 427h1v1h-1zM246 428h1v1h-1zM249 428h1v1h-1zM246 429h1v1h-1zM249 429h1v1h-1zM246 430h1v1h-1zM249 430h1v1h-1zM246 431h1v1h-1zM249 431h1v1h-1zM247 432h2v1h-2zM224 438h2v1h-2zM223 439h1v1h-1zM226 439h1v1h-1zM223 440h1v1h-1zM226 440h1v1h-1zM223 441h1v1h-1zM226 441h1v1h-1zM223 442h1v1h-1zM226 442h1v1h-1zM223 443h1v1h-1zM226 443h1v1h-1zM224 444h2v1h-2zM229 444h1v1h-1zM232 438h2v1h-2zM231 439h1v1h-1zM234 439h1v1h-1zM231 440h1v1h-1zM234 440h1v1h-1zM231 441h1v1h-1zM234 441h1v1h-1zM231 442h1v1h-1zM234 442h1v1h-1zM231 443h1v1h-1zM234 443h1v1h-1zM232 444h2v1h-2zM236 438h4v1h-4zM239 439h1v1h-1zM238 440h1v1h-1zM238 441h1v1h-1zM237 442h1v1h-1zM237 443h1v1h-1zM237 444h1v1h-1zM244 438h1v1h-1zM243 439h2v1h-2zM242 440h1v1h-1zM244 440h1v1h-1zM241 441h1v1h-1zM244 441h1v1h-1zM241 442h4v1h-4zM244 443h1v1h-1zM244 444h1v1h-1zM247 438h2v1h-2zM246 439h1v1h-1zM249 439h1v1h-1zM246 440h1v1h-1zM249 440h1v1h-1zM246 441h1v1h-1zM249 441h1v1h-1zM246 442h1v1h-1zM249 442h1v1h-1zM246 443h1v1h-1zM249 443h1v1h-1zM247 444h2v1h-2z"/></svg><div class="t" style="left:206.00px;top:378px;letter-spacing:-1.600px;">00</div><div class="t" style="left:165.00px;top:414px;letter-spacing:-0.800px;">18</div><div class="t" style="left:245.00px;top:412px;letter-spacing:-1.600px;background:#d4d0c8;padding:2px 2px 0 1px;height:14px">06</div><div class="t" style="left:205.00px;top:458px;letter-spacing:-0.800px;">12</div><div class="t" style="left:275.00px;top:378px;letter-spacing:-0.267px;">Часы</div><div class="t" style="left:343.00px;top:378px;letter-spacing:-0.480px;">Минуты</div><div style="left:267px;top:393px;width:60px;height:21px;background:#fff;box-shadow:inset -1px -1px #fff,inset 1px 1px #808080,inset -2px -2px #d4d0c8,inset 2px 2px #404040"></div><div style="left:309px;top:395px;width:16px;height:17px;background:#d4d0c8;box-shadow:inset -1px -1px #404040,inset 1px 1px #d4d0c8,inset -2px -2px #808080,inset 2px 2px #fff"></div><div style="left:313px;top:401px;width:7px;height:1px;background:#000"></div><div style="left:314px;top:402px;width:5px;height:1px;background:#000"></div><div style="left:315px;top:403px;width:3px;height:1px;background:#000"></div><div style="left:316px;top:404px;width:1px;height:1px;background:#000"></div><div class="t" style="left:271px;top:398px;">03</div><div style="left:335px;top:393px;width:60px;height:21px;background:#fff;box-shadow:inset -1px -1px #fff,inset 1px 1px #808080,inset -2px -2px #d4d0c8,inset 2px 2px #404040"></div><div style="left:377px;top:395px;width:16px;height:17px;background:#d4d0c8;box-shadow:inset -1px -1px #404040,inset 1px 1px #d4d0c8,inset -2px -2px #808080,inset 2px 2px #fff"></div><div style="left:381px;top:401px;width:7px;height:1px;background:#000"></div><div style="left:382px;top:402px;width:5px;height:1px;background:#000"></div><div style="left:383px;top:403px;width:3px;height:1px;background:#000"></div><div style="left:384px;top:404px;width:1px;height:1px;background:#000"></div><div class="t" style="left:339px;top:398px;">30</div><div style="left:267px;top:421px;width:60px;height:21px;background:#fff;box-shadow:inset -1px -1px #fff,inset 1px 1px #808080,inset -2px -2px #d4d0c8,inset 2px 2px #404040"></div><div style="left:309px;top:423px;width:16px;height:17px;background:#d4d0c8;box-shadow:inset -1px -1px #404040,inset 1px 1px #d4d0c8,inset -2px -2px #808080,inset 2px 2px #fff"></div><div style="left:313px;top:429px;width:7px;height:1px;background:#000"></div><div style="left:314px;top:430px;width:5px;height:1px;background:#000"></div><div style="left:315px;top:431px;width:3px;height:1px;background:#000"></div><div style="left:316px;top:432px;width:1px;height:1px;background:#000"></div><div class="t" style="left:271px;top:426px;">12</div><div style="left:335px;top:421px;width:60px;height:21px;background:#fff;box-shadow:inset -1px -1px #fff,inset 1px 1px #808080,inset -2px -2px #d4d0c8,inset 2px 2px #404040"></div><div style="left:377px;top:423px;width:16px;height:17px;background:#d4d0c8;box-shadow:inset -1px -1px #404040,inset 1px 1px #d4d0c8,inset -2px -2px #808080,inset 2px 2px #fff"></div><div style="left:381px;top:429px;width:7px;height:1px;background:#000"></div><div style="left:382px;top:430px;width:5px;height:1px;background:#000"></div><div style="left:383px;top:431px;width:3px;height:1px;background:#000"></div><div style="left:384px;top:432px;width:1px;height:1px;background:#000"></div><div class="t" style="left:339px;top:426px;">40</div><div class="t" style="left:404.00px;top:398px;letter-spacing:-0.533px;">День</div><div class="t" style="left:403.00px;top:426px;letter-spacing:-0.267px;">Ночь</div><div style="left:267px;top:447px;width:13px;height:13px;background:#fff;box-shadow:inset -1px -1px #fff,inset 1px 1px #808080,inset -2px -2px #d4d0c8,inset 2px 2px #404040"></div><div class="t" style="left:285.00px;top:447px;letter-spacing:-0.480px;">Цена не зависит от времени</div><div style="left:457px;top:393px;width:90px;height:21px;background:#fff;box-shadow:inset -1px -1px #fff,inset 1px 1px #808080,inset -2px -2px #d4d0c8,inset 2px 2px #404040"></div><div class="t" style="left:460px;top:397px;">0.0720/0.0740</div><div style="left:457px;top:421px;width:90px;height:21px;background:#fff;box-shadow:inset -1px -1px #fff,inset 1px 1px #808080,inset -2px -2px #d4d0c8,inset 2px 2px #404040"></div><div class="t" style="left:460px;top:425px;">0.0010/0.0005</div><div class="t" style="left:565.00px;top:394px;letter-spacing:-0.533px;">Цена</div><div class="t" style="left:565.00px;top:407px;letter-spacing:-0.267px;">днем</div><div class="t" style="left:565.00px;top:422px;letter-spacing:-0.533px;">Цена</div><div class="t" style="left:565.00px;top:435px;letter-spacing:-0.600px;">ночью</div><div style="left:621px;top:393px;width:60px;height:21px;background:#fff;box-shadow:inset -1px -1px #fff,inset 1px 1px #808080,inset -2px -2px #d4d0c8,inset 2px 2px #404040"></div><div class="t" style="left:624px;top:397px;">50</div><div class="t" style="left:689.00px;top:398px;letter-spacing:-0.533px;">Порог (Мб)</div><div style="left:621px;top:427px;width:13px;height:13px;background:#fff;box-shadow:inset -1px -1px #fff,inset 1px 1px #808080,inset -2px -2px #d4d0c8,inset 2px 2px #404040"></div><div class="t" style="left:639.00px;top:427px;letter-spacing:-0.356px;">Без порога</div><div style="left:769px;top:30px;width:18px;height:443px;background:#fff;box-shadow:inset -1px -1px #fff,inset 1px 1px #808080"></div><div style="left:770px;top:47px;width:16px;height:409px;background-color:#fff;background-image:repeating-conic-gradient(#d4d0c8 0 25%,#fff 0 50%);background-size:2px 2px"></div><div style="left:770px;top:31px;width:16px;height:16px;background:#d4d0c8;box-shadow:inset -1px -1px #404040,inset 1px 1px #d4d0c8,inset -2px -2px #808080,inset 2px 2px #fff"></div><div style="left:778px;top:38px;width:1px;height:1px;background:#fff"></div><div style="left:777px;top:39px;width:3px;height:1px;background:#fff"></div><div style="left:776px;top:40px;width:5px;height:1px;background:#fff"></div><div style="left:775px;top:41px;width:7px;height:1px;background:#fff"></div><div style="left:777px;top:37px;width:1px;height:1px;background:#808080"></div><div style="left:776px;top:38px;width:3px;height:1px;background:#808080"></div><div style="left:775px;top:39px;width:5px;height:1px;background:#808080"></div><div style="left:774px;top:40px;width:7px;height:1px;background:#808080"></div><div style="left:770px;top:456px;width:16px;height:16px;background:#d4d0c8;box-shadow:inset -1px -1px #404040,inset 1px 1px #d4d0c8,inset -2px -2px #808080,inset 2px 2px #fff"></div><div style="left:775px;top:463px;width:7px;height:1px;background:#fff"></div><div style="left:776px;top:464px;width:5px;height:1px;background:#fff"></div><div style="left:777px;top:465px;width:3px;height:1px;background:#fff"></div><div style="left:778px;top:466px;width:1px;height:1px;background:#fff"></div><div style="left:774px;top:462px;width:7px;height:1px;background:#808080"></div><div style="left:775px;top:463px;width:5px;height:1px;background:#808080"></div><div style="left:776px;top:464px;width:3px;height:1px;background:#808080"></div><div style="left:777px;top:465px;width:1px;height:1px;background:#808080"></div><div style="left:351px;top:482px;width:75px;height:25px;background:#d4d0c8;box-shadow:inset -1px -1px #404040,inset 1px 1px #fff,inset -2px -2px #808080,inset 2px 2px #d4d0c8"></div><div class="t" style="left:382.00px;top:489px;letter-spacing:-0.800px;">Ok</div></div></body></html>
